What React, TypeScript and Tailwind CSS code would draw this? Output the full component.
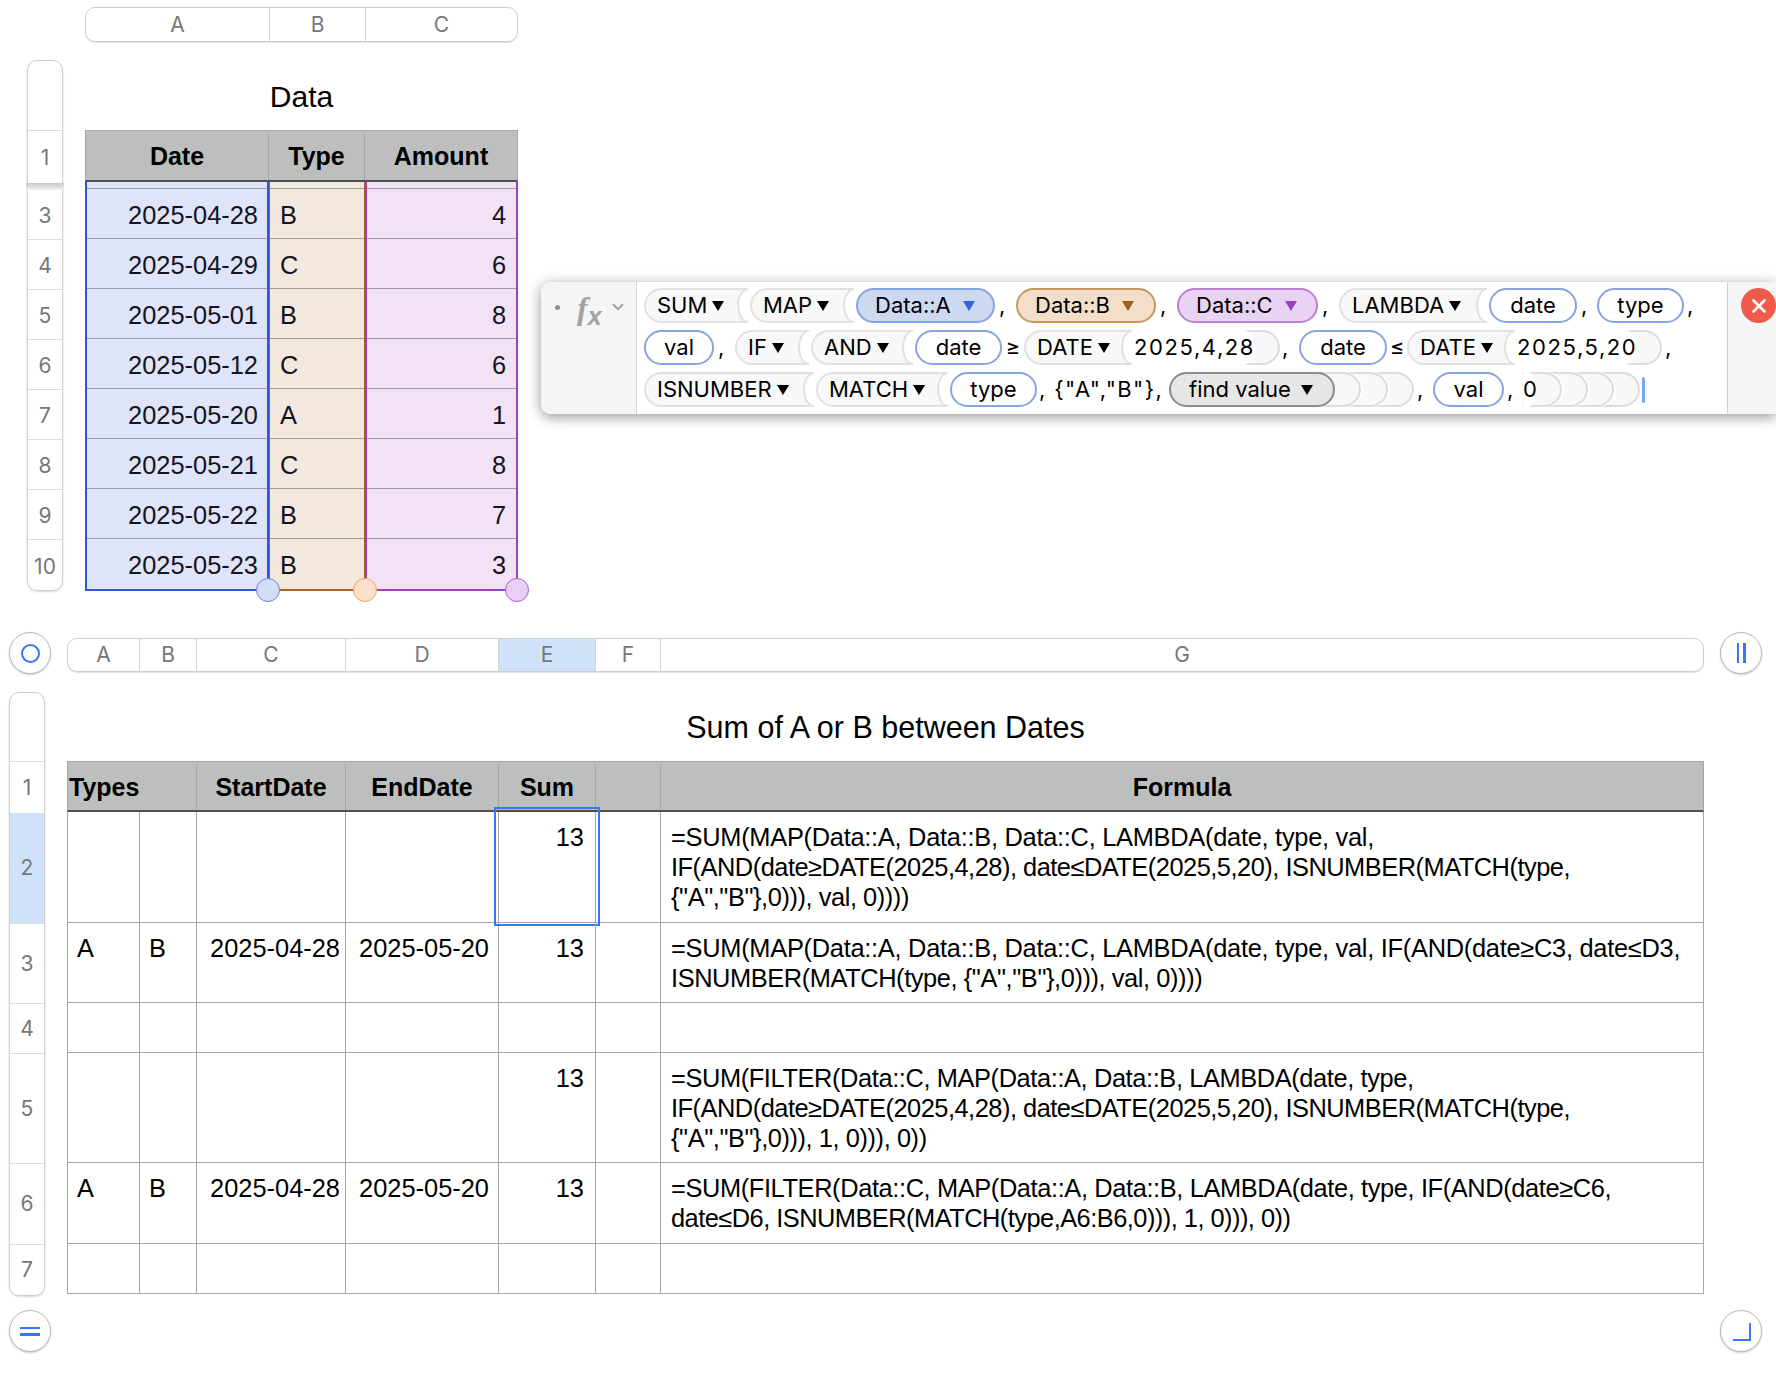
import { ChevronDown } from 'lucide-react';

const sans = "font-['Liberation_Sans',Arial,sans-serif]";
const ui = "font-['Inter','Noto_Sans',sans-serif]";

function Caret({ className = 'ml-[5px] border-t-black' }: { className?: string }) {
  return <span className={`inline-block h-0 w-0 border-x-[6.5px] border-t-[10px] border-x-transparent ${className}`} />;
}

// function token: its right end is a "(" cut out of the pill
function Fn({ label, w }: { label: string; w: string }) {
  return (
    <span className={`relative mr-[2px] flex h-[35px] shrink-0 items-center rounded-l-full border-y-2 border-l-2 border-[#e1e1e1] bg-[#f8f8f8] pl-[11px] ${w}`}>
      {label}
      <Caret />
      <span className="absolute -bottom-[2px] -top-[2px] right-0 w-[11px] rounded-l-[11px_17.5px] border-y-2 border-l-2 border-[#e1e1e1] bg-white" />
    </span>
  );
}

function Arg({ label, w }: { label: string; w: string }) {
  return (
    <span className={`flex h-[35px] shrink-0 items-center justify-center rounded-full border-2 border-[#87a4e0] bg-white ${w}`}>
      {label}
    </span>
  );
}

function Ref({ label, w, tone, caret }: { label: string; w: string; tone: string; caret: string }) {
  return (
    <span className={`flex h-[35px] shrink-0 items-center rounded-full border-2 pl-[17px] ${w} ${tone}`}>
      {label}
      <Caret className={`ml-[12px] ${caret}`} />
    </span>
  );
}

// closing paren: tucked under whatever is to its left, so the left side reads concave
function Close({ className }: { className: string }) {
  return <span className={`relative h-[35px] w-[40px] shrink-0 rounded-r-[18px_17.5px] border-y-2 border-r-2 border-[#dcdcdc] bg-[#f8f8f8] shadow-[2px_0_0_0_#fff] ${className}`} />;
}

function Num({ label, w }: { label: string; w: string }) {
  return (
    <span className={`relative z-[6] flex h-[35px] shrink-0 items-center whitespace-nowrap rounded-r-[12px_17.5px] bg-white tracking-[1.6px] ${w}`}>
      {label}
    </span>
  );
}

function FormulaBar() {
  return (
    <div className={`absolute left-[541px] right-0 top-[282px] z-50 flex h-[132px] rounded-l-[10px] bg-white shadow-[0_3px_14px_rgba(0,0,0,0.42)] ${ui}`}>
      <div className="flex h-full w-[96px] shrink-0 items-start rounded-l-[10px] border-r border-[#d4d4d4] bg-[#f5f5f5] pl-[14px] pt-[22px]">
        <span className="mt-[1px] h-[5px] w-[5px] rounded-full bg-[#8d8d8d]" />
        <span className="relative -top-[12px] ml-[17px] font-['Liberation_Serif',serif] text-[32px] font-bold italic leading-none text-[#a2a2a2]">
          f<span className="relative top-[6px] font-['Liberation_Sans',sans-serif] text-[25px]">x</span>
        </span>
        <ChevronDown className="-mt-[6px] ml-[7px] h-[18px] w-[18px] text-[#a2a2a2]" strokeWidth={2.5} />
      </div>

      <div className="flex min-w-0 flex-1 flex-col gap-[7px] pl-[7px] pt-[6px] text-[22px] text-black">
        <div className="flex items-center">
          <Fn label="SUM" w="w-[104px]" />
          <Fn label="MAP" w="w-[104px]" />
          <Ref label="Data::A" w="w-[139px]" tone="border-[#86a3e2] bg-[#cdd9f1]" caret="border-t-[#3a62d8]" />
          <span className="w-[21px] pl-[4px]">,</span>
          <Ref label="Data::B" w="w-[140px]" tone="border-[#c9965f] bg-[#f3dfc9]" caret="border-t-[#a5581f]" />
          <span className="w-[21px] pl-[4px]">,</span>
          <Ref label="Data::C" w="w-[141px]" tone="border-[#bb7fd4] bg-[#e8d3f3]" caret="border-t-[#9a3fc0]" />
          <span className="w-[21px] pl-[4px]">,</span>
          <Fn label="LAMBDA" w="w-[148px]" />
          <Arg label="date" w="w-[88px]" />
          <span className="w-[20px] pl-[4px]">,</span>
          <Arg label="type" w="w-[87px]" />
          <span className="pl-[3px]">,</span>
        </div>

        <div className="flex items-center">
          <Arg label="val" w="w-[70px]" />
          <span className="w-[21px] pl-[4px]">,</span>
          <Fn label="IF" w="w-[74px]" />
          <Fn label="AND" w="w-[102px]" />
          <Arg label="date" w="w-[87px]" />
          <span className="w-[22px] text-center">≥</span>
          <Fn label="DATE" w="w-[108px]" />
          <Num label="2025,4,28" w="w-[121px]" />
          <Close className="z-[5] -ml-[15px]" />
          <span className="w-[19px] pl-[2px]">,</span>
          <Arg label="date" w="w-[88px]" />
          <span className="w-[20px] text-center">≤</span>
          <Fn label="DATE" w="w-[108px]" />
          <Num label="2025,5,20" w="w-[120px]" />
          <Close className="z-[5] -ml-[15px]" />
          <span className="pl-[3px]">,</span>
        </div>

        <div className="flex items-center">
          <Fn label="ISNUMBER" w="w-[170px]" />
          <Fn label="MATCH" w="w-[132px]" />
          <Arg label="type" w="w-[87px]" />
          <span className="w-[132px] whitespace-pre pl-[2px] tracking-[1.4px]">, {'{"A","B"},'}</span>
          <span className="relative z-[6] flex h-[35px] w-[166px] shrink-0 items-center rounded-full border-2 border-[#8a8a8a] bg-[#e6e6e6] pl-[18px]">
            find value
            <Caret className="ml-[10px] border-t-black" />
          </span>
          <Close className="z-[5] -ml-[14px]" />
          <Close className="z-[4] -ml-[13px]" />
          <Close className="z-[3] -ml-[14px]" />
          <span className="w-[19px] pl-[3px]">,</span>
          <Arg label="val" w="w-[71px]" />
          <span className="w-[19px] pl-[3px]">,</span>
          <span className="relative z-[6] flex h-[35px] w-[13px] shrink-0 items-center rounded-r-[8px_17.5px] bg-white">0</span>
          <Close className="z-[5] -ml-[14px]" />
          <Close className="z-[4] -ml-[14px]" />
          <Close className="z-[3] -ml-[14px]" />
          <Close className="z-[2] -ml-[14px]" />
          <span className="ml-[2px] h-[26px] w-[3px] rounded-full bg-[#78a5f5]" />
        </div>
      </div>

      <div className="flex w-[49px] shrink-0 items-start border-l border-[#cfcfcf] bg-[#f5f5f5] pl-[13px] pt-[6px]">
        <span className="flex h-[35px] w-[35px] shrink-0 items-center justify-center rounded-full bg-[#ee5b4b]">
          <svg viewBox="0 0 16 16" className="h-[16px] w-[16px]" stroke="white" strokeWidth="2.6" strokeLinecap="round">
            <path d="M2.5 2.5l11 11M13.5 2.5l-11 11" />
          </svg>
        </span>
      </div>
    </div>
  );
}

function ColHead({ label, w, active = false }: { label: string; w: string; active?: boolean }) {
  return (
    <div className={`flex h-full items-center justify-center border-r border-[#d3d3d3] last:border-r-0 first:rounded-l-[10px] last:rounded-r-[10px] ${w} ${active ? 'bg-[#cfe2fa]' : ''}`}>
      {label}
    </div>
  );
}

const dataRows = [
  ['3', '2025-04-28', 'B', '4'],
  ['4', '2025-04-29', 'C', '6'],
  ['5', '2025-05-01', 'B', '8'],
  ['6', '2025-05-12', 'C', '6'],
  ['7', '2025-05-20', 'A', '1'],
  ['8', '2025-05-21', 'C', '8'],
  ['9', '2025-05-22', 'B', '7'],
  ['10', '2025-05-23', 'B', '3'],
];

function DataTable() {
  return (
    <div className="relative h-[625px]">
      <div className={`ml-[85px] flex h-[35px] w-[433px] rounded-[10px] border border-[#cdcdcd] text-[21px] text-[#76767b] shadow-[0_1px_1px_rgba(0,0,0,0.12)] ${ui}`}>
        <ColHead label="A" w="w-[184px]" />
        <ColHead label="B" w="w-[96px]" />
        <ColHead label="C" w="flex-1" />
      </div>

      <div className="mt-[18px] flex">
        <div className={`ml-[27px] w-[36px] rounded-[10px] border border-[#cdcdcd] text-[21px] text-[#76767b] shadow-[0_1px_2px_rgba(0,0,0,0.15)] ${ui}`}>
          <div className="h-[70px] border-b border-[#dcdcdc]" />
          <div className="flex h-[52px] items-center justify-center pt-[2px]">1</div>
          <div className="-mx-[2px] h-[7px] bg-gradient-to-b from-[#c6c6c6] to-[#f2f2f2]" />
          {dataRows.map((r, i) => (
            <div key={r[0]} className={`flex h-[50px] items-center justify-center pt-[3px] ${i < 7 ? 'border-b border-[#dcdcdc]' : ''}`}>
              {r[0]}
            </div>
          ))}
        </div>

        <div className={`relative ml-[22px] w-[433px] text-[25.4px] text-black ${sans}`}>
          <div className="flex h-[70px] items-center justify-center pt-[2px] text-[30px]">Data</div>
          <div className="flex h-[52px] border border-[#a6a6a6] border-b-2 border-b-[#4f4f4f] bg-[#bdbfbe] pt-[2px] text-[25px] font-bold">
            <div className="flex w-[183px] items-center justify-center border-r border-[#a6a6a6]">Date</div>
            <div className="flex w-[96px] items-center justify-center border-r border-[#a6a6a6]">Type</div>
            <div className="flex flex-1 items-center justify-center">Amount</div>
          </div>
          <div className="flex text-[#14141f]">
            <div className="w-[184px] border-x-2 border-b-2 border-[#2d56d8] bg-[#e0e4f8] text-right">
              <div className="h-[7px] border-b border-[#9c9ca8]" />
              {dataRows.map((r, i) => (
                <div key={r[0]} className={`flex h-[50px] items-center justify-end pr-[9px] pt-[3px] ${i < 7 ? 'border-b border-[#9c9ca8]' : ''}`}>{r[1]}</div>
              ))}
            </div>
            <div className="w-[96px] border-x border-b-2 border-[#a8601f] bg-[#f2e8de]">
              <div className="h-[7px] border-b border-[#a39c96]" />
              {dataRows.map((r, i) => (
                <div key={r[0]} className={`flex h-[50px] items-center pl-[10px] pt-[3px] ${i < 7 ? 'border-b border-[#a39c96]' : ''}`}>{r[2]}</div>
              ))}
            </div>
            <div className="flex-1 border-x-2 border-b-2 border-[#a03fc6] bg-[#f1e2f6]">
              <div className="h-[7px] border-b border-[#a098a8]" />
              {dataRows.map((r, i) => (
                <div key={r[0]} className={`flex h-[50px] items-center justify-end pr-[10px] pt-[3px] ${i < 7 ? 'border-b border-[#a098a8]' : ''}`}>{r[3]}</div>
              ))}
            </div>
          </div>
          <span className="absolute -bottom-[11px] left-[171px] h-[24px] w-[24px] rounded-full border border-[#6c7fe9] bg-[#d3ddf5]" />
          <span className="absolute -bottom-[11px] left-[268px] h-[24px] w-[24px] rounded-full border border-[#f0a35c] bg-[#fbe1ca]" />
          <span className="absolute -bottom-[11px] left-[420px] h-[24px] w-[24px] rounded-full border border-[#b458d8] bg-[#e8cff5]" />
        </div>
      </div>
    </div>
  );
}

function CircleButton({ children }: { children: React.ReactNode }) {
  return (
    <div className="flex h-[42px] w-[42px] shrink-0 items-center justify-center rounded-full border border-[#b9b9b9] bg-white shadow-[0_1px_2px_rgba(0,0,0,0.2)]">
      {children}
    </div>
  );
}

type Line = [string, string];

const sumRows: { n: string; h: string; a?: string; b?: string; c: string; d: string; v: string; sel?: boolean; f: Line[] }[] = [
  {
    n: '2', h: 'h-[111px]', c: '', d: '', v: '13', sel: true,
    f: [
      ['=SUM(MAP(Data::A, Data::B, Data::C, LAMBDA(date, type, val,', 'tracking-[-0.27px]'],
      ['IF(AND(date≥DATE(2025,4,28), date≤DATE(2025,5,20), ISNUMBER(MATCH(type,', 'tracking-[-0.49px]'],
      ['{"A","B"},0))), val, 0))))', 'tracking-[-0.43px]'],
    ],
  },
  {
    n: '3', h: 'h-[80px]', a: 'A', b: 'B', c: '2025-04-28', d: '2025-05-20', v: '13',
    f: [
      ['=SUM(MAP(Data::A, Data::B, Data::C, LAMBDA(date, type, val, IF(AND(date≥C3, date≤D3,', 'tracking-[-0.27px]'],
      ['ISNUMBER(MATCH(type, {"A","B"},0))), val, 0))))', 'tracking-[-0.41px]'],
    ],
  },
  { n: '4', h: 'h-[50px]', c: '', d: '', v: '', f: [] },
  {
    n: '5', h: 'h-[110px]', c: '', d: '', v: '13',
    f: [
      ['=SUM(FILTER(Data::C, MAP(Data::A, Data::B, LAMBDA(date, type,', 'tracking-[-0.39px]'],
      ['IF(AND(date≥DATE(2025,4,28), date≤DATE(2025,5,20), ISNUMBER(MATCH(type,', 'tracking-[-0.49px]'],
      ['{"A","B"},0))), 1, 0))), 0))', 'tracking-[-0.42px]'],
    ],
  },
  {
    n: '6', h: 'h-[81px]', a: 'A', b: 'B', c: '2025-04-28', d: '2025-05-20', v: '13',
    f: [
      ['=SUM(FILTER(Data::C, MAP(Data::A, Data::B, LAMBDA(date, type, IF(AND(date≥C6,', 'tracking-[-0.38px]'],
      ['date≤D6, ISNUMBER(MATCH(type,A6:B6,0))), 1, 0))), 0))', 'tracking-[-0.52px]'],
    ],
  },
  { n: '7', h: 'h-[50px]', c: '', d: '', v: '', f: [] },
];

const cell = 'border-r border-[#a6a6a6] pt-[10px]';

function SumTable() {
  return (
    <div>
      <div className="flex items-center px-[9px]">
        <CircleButton><span className="h-[19px] w-[19px] rounded-full border-[2.5px] border-[#3478f6]" /></CircleButton>
        <div className={`ml-[16px] mt-[4px] flex h-[34px] w-[1637px] rounded-[10px] border border-[#cdcdcd] text-[21px] text-[#76767b] shadow-[0_1px_1px_rgba(0,0,0,0.12)] ${ui}`}>
          <ColHead label="A" w="w-[72px]" />
          <ColHead label="B" w="w-[57px]" />
          <ColHead label="C" w="w-[149px]" />
          <ColHead label="D" w="w-[153px]" />
          <ColHead label="E" w="w-[97px]" active />
          <ColHead label="F" w="w-[65px]" />
          <ColHead label="G" w="flex-1" />
        </div>
        <div className="ml-[16px]">
          <CircleButton>
            <span className="flex gap-[4px]">
              <span className="h-[20px] w-[2.5px] bg-[#3478f6]" />
              <span className="h-[20px] w-[2.5px] bg-[#3478f6]" />
            </span>
          </CircleButton>
        </div>
      </div>

      <div className="mt-[18px] flex">
        <div className={`ml-[9px] w-[36px] rounded-[10px] border border-[#cdcdcd] text-[21px] text-[#76767b] shadow-[0_1px_2px_rgba(0,0,0,0.15)] ${ui}`}>
          <div className="h-[69px] border-b border-[#dcdcdc]" />
          <div className="flex h-[51px] items-center justify-center">1</div>
          {sumRows.map((r) => (
            <div key={r.n} className={`flex items-center justify-center border-b border-[#dcdcdc] last:rounded-b-[10px] last:border-b-0 ${r.h} ${r.sel ? 'bg-[#cfe2fa]' : ''}`}>
              {r.n}
            </div>
          ))}
        </div>

        <div className={`ml-[22px] w-[1637px] text-[25.4px] leading-[30px] text-black ${sans}`}>
          <div className="flex h-[69px] items-center justify-center pt-[1px] text-[30.5px]">Sum of A or B between Dates</div>
          <div className="flex h-[51px] border border-[#a6a6a6] border-b-2 border-b-[#4f4f4f] bg-[#bdbfbe] pt-[2px] text-[25px] font-bold">
            <div className="flex w-[129px] items-center border-r border-[#a6a6a6] pl-[1px]">Types</div>
            <div className="flex w-[149px] items-center justify-center border-r border-[#a6a6a6]">StartDate</div>
            <div className="flex w-[153px] items-center justify-center border-r border-[#a6a6a6]">EndDate</div>
            <div className="flex w-[97px] items-center justify-center border-r border-[#a6a6a6]">Sum</div>
            <div className="w-[65px] border-r border-[#a6a6a6]" />
            <div className="flex flex-1 items-center justify-center">Formula</div>
          </div>
          <div className="border-l border-[#a6a6a6]">
            {sumRows.map((r) => (
              <div key={r.n} className={`flex border-b border-[#a6a6a6] ${r.h}`}>
                <div className={`w-[72px] pl-[9px] ${cell}`}>{r.a}</div>
                <div className={`w-[57px] pl-[9px] ${cell}`}>{r.b}</div>
                <div className={`w-[149px] pr-[5px] text-right ${cell}`}>{r.c}</div>
                <div className={`w-[153px] pr-[9px] text-right ${cell}`}>{r.d}</div>
                <div className={`relative w-[97px] pr-[11px] text-right ${cell}`}>
                  {r.v}
                  {r.sel && <span className="absolute -bottom-[4px] -inset-x-[5px] -top-[5px] border-2 border-[#3478f6]" />}
                </div>
                <div className={`w-[65px] ${cell}`} />
                <div className={`flex-1 pl-[10px] ${cell}`}>
                  {r.f.map(([line, tracking]) => (
                    <div key={line} className={`whitespace-pre ${tracking}`}>{line}</div>
                  ))}
                </div>
              </div>
            ))}
          </div>
        </div>
      </div>

      <div className="mt-[14px] flex justify-between px-[9px] pr-[14px]">
        <CircleButton>
          <span className="flex flex-col gap-[4px]">
            <span className="h-[2.5px] w-[20px] bg-[#3478f6]" />
            <span className="h-[2.5px] w-[20px] bg-[#3478f6]" />
          </span>
        </CircleButton>
        <CircleButton>
          <span className="ml-[1px] mt-[1px] h-[18px] w-[18px] border-b-[2.5px] border-r-[2.5px] border-[#3478f6]" />
        </CircleButton>
      </div>
    </div>
  );
}

export default function App() {
  return (
    <div className="relative h-[1380px] w-[1776px] overflow-hidden bg-white pt-[7px]">
      <DataTable />
      <SumTable />
      <FormulaBar />
    </div>
  );
}
